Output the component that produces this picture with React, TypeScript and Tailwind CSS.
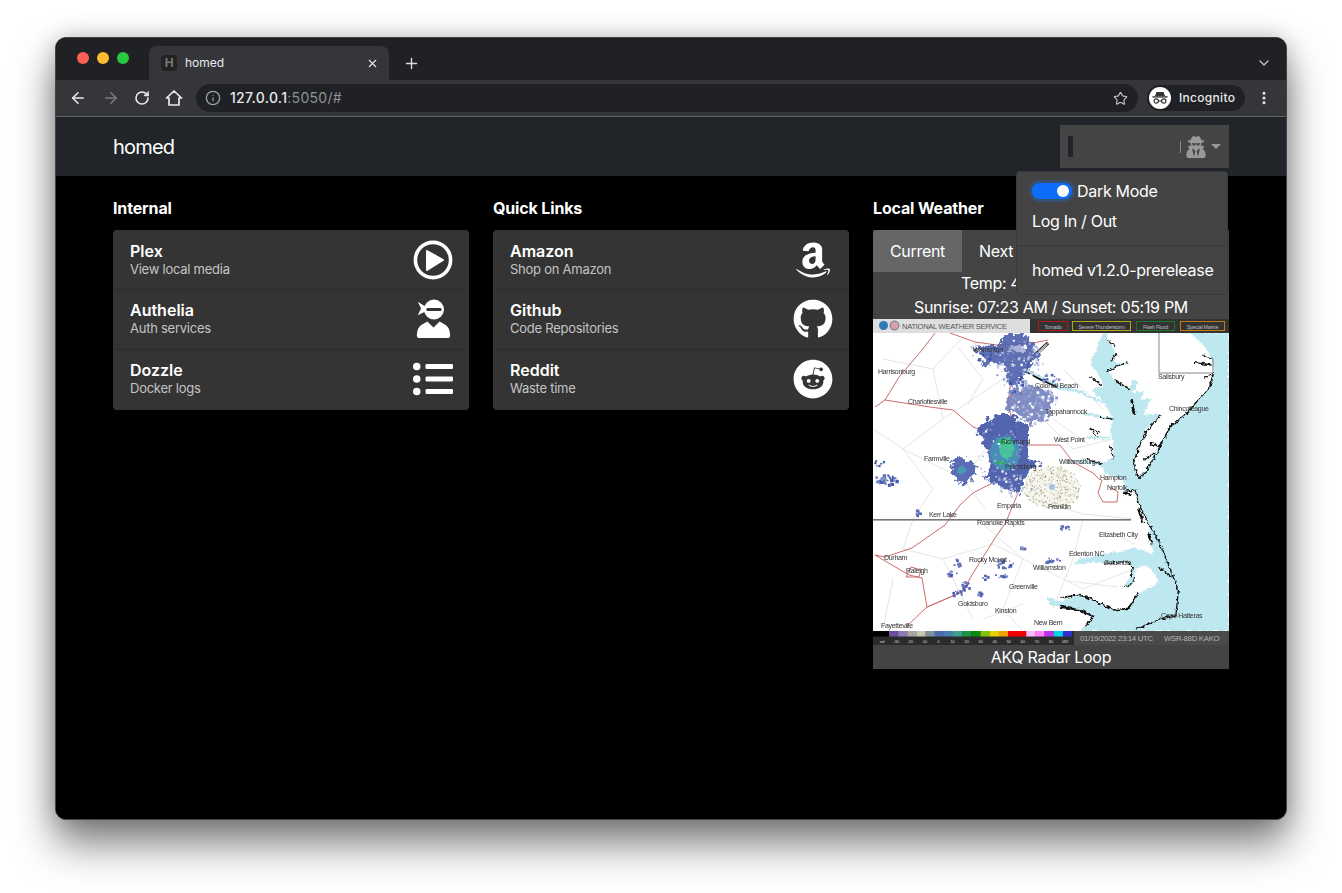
import { ArrowLeft, ArrowRight, ChevronDown, Info, MoreVertical, Plus, RotateCw, Star, X } from "lucide-react";
import { FaAmazon, FaGithub, FaListUl, FaReddit, FaUserSecret } from "react-icons/fa";
import type { ReactNode } from "react";

type Link = { title: string; sub: string; icon: ReactNode };

const PlayIcon = () => (
  <svg width="40" height="40" viewBox="0 0 40 40">
    <circle cx="20" cy="20" r="17.6" fill="none" stroke="white" strokeWidth="3.6" />
    <path d="M14 11 L30 20 L14 30 Z" fill="white" stroke="white" strokeWidth="2" strokeLinejoin="round" />
  </svg>
);

const NinjaIcon = () => (
  <svg width="40" height="40" viewBox="0 0 40 42" fill="white">
    <circle cx="21" cy="11" r="10.5" />
    <rect x="13" y="9.5" width="16" height="3.2" rx="1.4" fill="#343434" />
    <path d="M4 3 L12 8 L12 13 L4 17 L7.5 10 Z" />
    <path d="M3 38 Q3 29 10 26 L14 23.5 L20.5 30 L27 23.5 L31 26 Q38 29 38 38 Q38 41 35 41 L6 41 Q3 41 3 38 Z" />
  </svg>
);

const internal: Link[] = [
  { title: "Plex", sub: "View local media", icon: <PlayIcon /> },
  { title: "Authelia", sub: "Auth services", icon: <NinjaIcon /> },
  { title: "Dozzle", sub: "Docker logs", icon: <FaListUl size={40} color="white" /> },
];

const quick: Link[] = [
  { title: "Amazon", sub: "Shop on Amazon", icon: <FaAmazon size={40} color="white" /> },
  { title: "Github", sub: "Code Repositories", icon: <FaGithub size={40} color="white" /> },
  { title: "Reddit", sub: "Waste time", icon: <FaReddit size={40} color="white" /> },
];

// radar speckle is noise, seeded so the picture never changes between runs
let seed = 1234;
const rnd = () => {
  seed = (seed * 16807) % 2147483647;
  return (seed % 10000) / 10000;
};

const blob = (cx: number, cy: number, rx: number, ry: number, n: number, colors: string[], size = 3) =>
  Array.from({ length: n }, () => {
    const a = rnd() * Math.PI * 2;
    const r = Math.sqrt(rnd());
    return {
      x: cx + Math.cos(a) * r * rx,
      y: cy + Math.sin(a) * r * ry,
      s: size * (0.5 + rnd()),
      c: colors[Math.floor(rnd() * colors.length)],
    };
  });

const blues = ["#3f55a8", "#4a5fb0", "#5b6db5", "#7f8cc4"];
const pale = ["#a5aed6", "#c4cae6", "#ffffff", "#8a97cc"];
const tan = ["#8f8a60", "#b5b088", "#a8a478", "#c8c4a0", "#ffffff", "#ffffff"];

const speckle = [
  ...blob(145, 45, 26, 25, 90, pale, 1.8),
  ...blob(160, 85, 24, 20, 90, pale, 2),
  ...blob(128, 135, 25, 35, 70, pale, 1.5),
  ...blob(140, 165, 20, 12, 40, pale, 1.8),
  ...blob(143, 62, 8, 14, 24, blues, 2.2),
  ...blob(113, 36, 14, 6, 24, blues, 2.2),
  ...blob(176, 58, 12, 4, 14, blues, 2),
  ...blob(131, 244, 9, 5, 22, blues, 2),
  ...blob(127, 256, 6, 2, 8, blues, 2),
  ...blob(92, 266, 4, 5, 16, blues, 2),
  ...blob(84, 274, 5, 4, 16, blues, 2),
  ...blob(78, 254, 6, 3, 12, blues, 2),
  ...blob(84, 243, 4, 4, 8, blues, 2),
  ...blob(106, 274, 3, 4, 8, blues, 2),
  ...blob(113, 258, 4, 3, 6, blues, 2),
  ...blob(179, 241, 8, 3, 12, blues, 2),
  ...blob(192, 208, 6, 3, 12, blues, 2),
  ...blob(148, 228, 3, 2, 5, blues, 2),
  ...blob(44, 193, 4, 3, 8, blues, 2),
  ...blob(12, 160, 12, 5, 28, blues, 2.4),
  ...blob(6, 143, 5, 4, 8, blues, 2),
  ...blob(179, 168, 29, 22, 560, tan, 0.9),
];

const roads = [
  "2,88 12,81 26,58 49,31 62,14",
  "77,14 102,23 124,26 160,24 175,21",
  "12,81 57,88 80,91 100,108 124,116 155,126 187,126 200,143 220,154 227,161",
  "175,24 157,41 137,68 135,84 145,126 147,151 145,174 133,203 122,219 99,256 89,273 54,288 32,309",
  "145,151 129,159 100,174 87,186 72,206 39,229 12,238 2,236",
  "2,236 19,246 36,256 49,259 54,288",
  "54,288 82,276",
  "33,258 38,248 48,251 46,258 33,258",
  "229,161 225,174 230,183 244,183 245,173 237,168",
];

const counties = [
  "10,40 60,50 88,20", "60,50 70,100 30,130 60,170", "70,100 130,60 150,30", "30,130 90,160 112,190",
  "90,160 120,120", "170,100 200,130 240,120", "60,170 40,200", "160,180 210,195 260,200",
  "40,200 30,230 70,240 100,300", "110,205 150,240 210,270", "150,240 130,290 150,312", "210,200 200,240 180,290",
  "70,240 120,225 150,240", "210,270 260,250", "20,260 10,310", "250,40 240,14", "190,50 230,90", "85,28 110,60 95,85",
  "0,110 30,130", "180,100 215,125", "265,60 300,68 330,62", "240,215 262,225", "195,262 245,268", "110,300 150,285",
];

const labels: [string, number, number][] = [
  ["Harrisonburg", 5, 55], ["Charlottesville", 35, 85], ["Warrenton", 100, 33], ["Colonial Beach", 162, 69],
  ["Tappahannock", 172, 95], ["Salisbury", 285, 60], ["Chincoteague", 296, 92], ["West Point", 181, 123],
  ["Richmond", 128, 125], ["Farmville", 51, 142], ["Petersburg", 132, 150], ["Williamsburg", 186, 145],
  ["Hampton", 227, 161], ["Norfolk", 234, 171], ["Emporia", 124, 189], ["Franklin", 175, 190], ["Kerr Lake", 56, 198],
  ["Roanoke Rapids", 104, 206], ["Elizabeth City", 226, 218], ["Edenton NC", 196, 237], ["Columbia", 231, 246],
  ["Durham", 11, 241], ["Rocky Mount", 96, 243], ["Williamston", 160, 251], ["Raleigh", 33, 254], ["Greenville", 136, 270],
  ["Goldsboro", 85, 287], ["Kinston", 122, 294], ["New Bern", 161, 306], ["Cape Hatteras", 288, 299], ["Fayetteville", 8, 309],
];

const legendColors = [
  "#6a4fa0", "#8e7ab5", "#a8a8a0", "#c8c8b0", "#8090a0", "#4a6db0", "#4a80b0", "#40a090", "#1a9a40", "#0a8a10", "#80c010",
  "#e8d000", "#f0a000", "#f00000", "#f00000", "#ffb8ff", "#ff80ff", "#c030f0", "#00d8e0", "#3030d0",
];
const legendLabels = ["nd", "-30", "-20", "-10", "0", "10", "20", "30", "40", "50", "60", "70", "80", "≥82"];
const warnings: [string, number, number, string][] = [
  ["Tornado", 165, 29, "#b01818"],
  ["Severe Thunderstorm", 199, 58, "#b0a818"],
  ["Flash Flood", 263, 38, "#187a28"],
  ["Special Marine", 307, 44, "#c07a18"],
];

const RadarMap = () => (
  <svg viewBox="0 0 356 326" width="356" height="326" className="block">
    <defs>
      <filter id="soft" x="0" y="0" width="100%" height="100%">
        <feGaussianBlur stdDeviation="0.4" />
      </filter>
      <filter id="rough" x="-5%" y="-5%" width="110%" height="110%">
        <feTurbulence type="fractalNoise" baseFrequency="0.28" numOctaves="2" seed="4" />
        <feDisplacementMap in="SourceGraphic" scale="5" xChannelSelector="R" yChannelSelector="G" />
      </filter>
      <filter id="rougher" x="-5%" y="-5%" width="110%" height="110%">
        <feTurbulence type="fractalNoise" baseFrequency="0.18" numOctaves="3" seed="9" />
        <feDisplacementMap in="SourceGraphic" scale="13" xChannelSelector="R" yChannelSelector="G" />
      </filter>
    </defs>
    <rect width="356" height="326" fill="white" />
    <g filter="url(#soft)">
      {counties.map((p) => (
        <polyline key={p} points={p} fill="none" stroke="#dedede" strokeWidth="0.8" />
      ))}
      {/* water and coast, traced at 3x so the points read like the crops */}
      <g filter="url(#rough)">
        <g transform="translate(187 11) scale(0.3333)">
          <path
            d="M130 8 L105 70 L90 100 L125 150 L130 170 L95 180 L130 215 L160 265 L150 300 L160 340 L160 385 L120 400 L135 430 L190 450 L190 485 L225 480 L240 530 L265 580 L278 670 L230 655 L170 665 L100 680 L60 685 L40 705 L100 695 L130 700 L200 695 L220 715 L210 740 L190 770 L215 765 L225 740 L230 715 L260 705 L290 740 L295 760 L255 780 L235 790 L205 835 L160 840 L120 820 L80 800 L50 795 L0 815 L-40 800 L-30 825 L60 840 L100 860 L75 890 L60 903 L507 903 L507 8 Z"
            fill="#bde8ef"
          />
          <path
            d="M145 8 L390 8 L430 45 L455 85 L460 130 L450 170 L415 210 L375 250 L330 290 L295 350 L255 420 L235 445 L220 400 L240 340 L255 300 L290 265 L300 250 L250 255 L265 225 L275 205 L240 210 L255 180 L215 190 L235 155 L215 150 L210 175 L165 150 L145 125 L180 105 L210 100 L155 95 L170 70 L140 30 Z"
            fill="white"
          />
          <g fill="none" stroke="#bde8ef" strokeWidth="8">
            <path d="M-20 172 L50 182 L130 220" />
            <path d="M70 250 L160 268" />
            <path d="M80 322 L150 325" />
            <path d="M30 392 L125 402" />
          </g>
          <g fill="none" stroke="#111" strokeLinejoin="round">
            <path d="M300 255 L255 310 L240 345 L220 400 L235 445" strokeWidth="4" />
            <path d="M460 130 L450 170 L375 255 L330 290 L290 370 L255 430 L235 445" strokeWidth="4.5" />
            <path d="M270 340 L300 350 M250 390 L285 370" strokeWidth="5" />
            <path d="M430 75 L455 85 M405 98 L455 105 M430 145 L455 135" strokeWidth="4" />
            <path d="M140 125 L180 105 L205 98 M155 95 L170 70 M140 30 L165 50" strokeWidth="3.5" />
            <path d="M165 150 L210 178 M215 205 L225 255" strokeWidth="5" />
            <path d="M215 230 L225 250" strokeWidth="10" />
            <path d="M90 140 L125 165 M120 260 L160 268 M120 310 L90 295 L115 325 M150 345 L160 385 M70 385 L125 402" strokeWidth="3.5" />
            <path d="M190 485 L225 480 L240 530 L265 580 L295 630 L335 730 L355 780 L348 855 L300 868 L225 898" strokeWidth="4" />
            <path d="M235 535 L250 580 M265 610 L275 640" strokeWidth="8" />
            <path d="M190 488 L215 495" strokeWidth="8" />
            <path d="M295 710 L335 740" strokeWidth="5" />
            <path d="M0 805 L50 795 L80 800 L120 820 L160 840 L205 835 L235 790" strokeWidth="5" />
            <path d="M190 770 L215 765 L225 740 M130 700 L200 695 L220 715 L210 740" strokeWidth="3" />
            <path d="M0 830 L60 840 L100 860 L75 890" strokeWidth="6" />
          </g>
        </g>
      </g>
      <polyline points="286,13 286,54 340,54 340,40" fill="none" stroke="#555" strokeWidth="0.7" />
      <path d="M175 24 L160 38 L154 52 L168 60 L184 67" fill="none" stroke="#111" strokeWidth="3.4" />
      <path d="M174 25 L160 39 L155 52 L169 59 L186 67" fill="none" stroke="#bde8ef" strokeWidth="2" />
      {roads.map((p) => (
        <polyline key={p} points={p} fill="none" stroke="#cf6b6b" strokeWidth="1" />
      ))}
      {/* rain bands */}
      <g filter="url(#rougher)" opacity="0.92">
        <g transform="translate(57 11) scale(0.3333)">
          <path d="M125 50 L200 45 L230 10 L285 10 L310 50 L330 80 L300 110 L280 140 L250 170 L235 160 L225 105 L175 100 L155 110 L165 80 Z" fill="#5163ae" />
          <ellipse cx="260" cy="55" rx="24" ry="12" fill="#a3acd3" />
          <path d="M240 180 L300 165 L365 190 L365 240 L345 270 L300 280 L260 250 L225 240 Z" fill="#7683bf" />
          <path d="M135 300 L175 265 L240 250 L300 290 L295 330 L290 385 L330 395 L290 430 L280 470 L265 490 L210 470 L165 440 L185 405 L165 345 Z" fill="#4558a9" />
          <path d="M60 400 L90 380 L140 400 L130 450 L95 465 L65 430 Z" fill="#4d60ad" />
        </g>
      </g>
      <g filter="url(#rough)">
        <g transform="translate(57 11) scale(0.3333)">
          <ellipse cx="225" cy="370" rx="45" ry="52" fill="#4a8fb5" />
          <ellipse cx="230" cy="355" rx="22" ry="32" fill="#45c49a" />
          <ellipse cx="222" cy="335" rx="15" ry="8" fill="#2bc06a" />
          <ellipse cx="212" cy="398" rx="12" ry="5" fill="#2bb24a" />
          <ellipse cx="95" cy="420" rx="16" ry="10" fill="#4a9ab0" />
        </g>
      </g>
      <ellipse cx="179" cy="168" rx="28" ry="21" fill="#ddd9c0" opacity="0.25" />
      {speckle.map((c, i) => (
        <rect key={i} x={c.x} y={c.y} width={c.s} height={c.s} fill={c.c} />
      ))}
      <circle cx="179" cy="168" r="3" fill="#a8c0e0" />
      <rect x="0" y="200" width="258" height="1.6" fill="#777" />
      {labels.map(([t, x, y]) => (
        <text key={t} x={x} y={y} fontSize="7" fill="#333" fontFamily="Liberation Sans, sans-serif">
          {t}
        </text>
      ))}
    </g>
    <rect width="157" height="14" fill="#dedede" />
    <rect x="157" width="199" height="14" fill="#333" />
    <circle cx="10.5" cy="6.5" r="4.5" fill="#2f79b5" />
    <circle cx="21.5" cy="6.5" r="4.5" fill="#d8a0a8" stroke="#2a4a8a" strokeWidth="0.6" />
    <text x="29" y="9.5" fontSize="7.6" fill="#555" fontFamily="Liberation Sans, sans-serif">
      NATIONAL WEATHER SERVICE
    </text>
    {warnings.map(([t, x, w, c]) => (
      <g key={t}>
        <rect x={x + 0.5} y="2.5" width={w} height="9" fill="none" stroke={c} />
        <text x={x + w / 2 + 0.5} y="9.5" fontSize="5.4" fill="#bbb" textAnchor="middle" fontFamily="Liberation Sans, sans-serif">
          {t}
        </text>
      </g>
    ))}
    <rect y="312" width="356" height="14" fill="#4a4a4a" />
    <rect y="312" width="201" height="14" fill="#2b2b2b" />
    <rect y="312" width="16" height="5.5" fill="#000" />
    {legendColors.map((c, i) => (
      <rect key={i} x={16 + i * 9.15} y="312" width="9.3" height="5.5" fill={c} />
    ))}
    {legendLabels.map((t, i) => (
      <text key={t} x={9 + i * 14.07} y="323.6" fontSize="4.4" fill="#ccc" textAnchor="middle" fontFamily="Liberation Sans, sans-serif">
        {t}
      </text>
    ))}
    <text x="207" y="322" fontSize="7.8" fill="#b5b5b5" fontFamily="Liberation Sans, sans-serif">
      01/19/2022 23:14 UTC
    </text>
    <text x="291" y="322" fontSize="7.8" fill="#b5b5b5" fontFamily="Liberation Sans, sans-serif">
      WSR-88D KAKO
    </text>
  </svg>
);

const LinkCard = ({ heading, links }: { heading: string; links: Link[] }) => (
  <div>
    <h2 className="mb-[10px] text-base leading-6 font-bold tracking-[-0.15px] text-white">{heading}</h2>
    <div className="overflow-hidden rounded bg-[#343434] pb-px">
      {links.map((l, i) => (
        <div
          key={l.title}
          className={`flex items-center justify-between pr-4 pl-[17px] ${i > 0 ? "h-[60px] border-t border-[#2c2c2c] pb-[2px]" : "h-[59px]"}`}
        >
          <div className="flex -translate-y-px flex-col">
            <span className="text-base leading-5 font-semibold tracking-normal text-white">{l.title}</span>
            <span className="text-[13px] leading-4 tracking-[-0.25px] text-[#c4c4c4]">{l.sub}</span>
          </div>
          {l.icon}
        </div>
      ))}
    </div>
  </div>
);

const App = () => {
  return (
    <div className="h-[893px] w-[1342px] overflow-hidden bg-white pt-[37px] pl-[55px] font-['Inter',sans-serif] tracking-[-0.3px]">
      <div className="relative flex h-[783px] w-[1232px] flex-col overflow-hidden rounded-[11px] border border-[#444] bg-black shadow-[0_24px_40px_rgba(0,0,0,0.5),0_0_24px_rgba(0,0,0,0.2)]">
        {/* tab strip */}
        <div className="flex h-[42px] shrink-0 bg-[#202124] pl-[21px]">
          <div className="flex h-[42px] items-center gap-2 pb-[3px]">
            <span className="h-3 w-3 rounded-full bg-[#ff5f57]" />
            <span className="h-3 w-3 rounded-full bg-[#febc2e]" />
            <span className="h-3 w-3 rounded-full bg-[#28c840]" />
          </div>
          <div className="mt-2 ml-5 flex h-[34px] w-[240px] items-center rounded-t-lg bg-[#35363a] pr-[10px] pl-3">
            <span className="flex h-4 w-4 items-center justify-center rounded-sm bg-[#222] text-xs leading-none font-bold text-[#777]">
              H
            </span>
            <span className="ml-2 flex-1 text-xs tracking-normal text-[#e8eaed]">homed</span>
            <X size={13} color="#e8eaed" strokeWidth={2} />
          </div>
          <div className="ml-[14px] flex items-center pt-[8px]">
            <Plus size={17} color="#dadce0" strokeWidth={2} />
          </div>
          <div className="ml-auto flex items-center pt-[8px] pr-[14px]">
            <ChevronDown size={16} color="#bdc1c6" strokeWidth={2} />
          </div>
        </div>

        {/* toolbar */}
        <div className="flex h-[37px] shrink-0 items-center border-b border-[#626367] bg-[#35363a] pr-[14px] pl-[13px]">
          <div className="flex w-[127px] items-center justify-between pr-[13px]">
            <ArrowLeft size={18} color="#e8eaed" strokeWidth={2} />
            <ArrowRight size={18} color="#7b7c7f" strokeWidth={2} />
            <RotateCw size={16} color="#e8eaed" strokeWidth={2.4} />
            <svg width="18" height="18" viewBox="0 0 18 18" fill="none" stroke="#e8eaed" strokeWidth="1.7" strokeLinejoin="round">
              <path d="M1.5 9 L9 2 L16.5 9 H14 V16 H4 V9 Z" />
            </svg>
          </div>
          <div className="flex h-7 w-[942px] items-center rounded-full bg-[#202124] pr-[10px] pl-[9px]">
            <Info size={16} color="#9aa0a6" strokeWidth={2} />
            <span className="ml-[9px] flex-1 text-sm font-medium tracking-[0.3px] text-[#e8eaed]">
              127.0.0.1<span className="font-normal text-[#8f9296]">:5050/#</span>
            </span>
            <Star size={15} color="#c4c7c5" strokeWidth={1.8} />
          </div>
          <div className="ml-[9px] flex h-[26px] w-[98px] items-center rounded-full bg-[#202124] pl-[2px]">
            <span className="flex h-[22px] w-[22px] items-center justify-center rounded-full bg-white">
              <svg width="16" height="14" viewBox="0 0 16 14" fill="#35363a">
                <path d="M4.4 1 H11.6 L13 5 H3 Z" />
                <rect x="0.5" y="5.2" width="15" height="1.4" />
                <circle cx="4.2" cy="10" r="2.2" fill="none" stroke="#35363a" strokeWidth="1.2" />
                <circle cx="11.8" cy="10" r="2.2" fill="none" stroke="#35363a" strokeWidth="1.2" />
                <rect x="6.2" y="9.4" width="3.6" height="1.1" />
              </svg>
            </span>
            <span className="ml-[8px] text-xs font-medium tracking-[0.3px] text-[#e8eaed]">Incognito</span>
          </div>
          <div className="ml-auto flex">
            <MoreVertical size={16} color="#e8eaed" strokeWidth={2.6} />
          </div>
        </div>

        {/* app navbar */}
        <div className="flex h-[59px] shrink-0 items-center justify-between bg-[#212529] px-[57px]">
          <span className="text-xl tracking-[-0.8px] text-white">homed</span>
          <div className="flex h-[43px] w-[169px] items-center bg-[#444] pl-2">
            <span className="h-[21px] w-[5px] bg-[#212529]" />
            <span className="ml-[107px] h-3 w-px bg-[#888]" />
            <FaUserSecret size={22} color="#999" className="ml-[4px]" />
            <span className="ml-[4px] h-0 w-0 border-x-[5px] border-t-[5px] border-x-transparent border-t-[#999]" />
          </div>
        </div>

        {/* page body */}
        <div className="grid flex-1 grid-cols-3 items-start gap-6 bg-black px-[57px] pt-5">
          <LinkCard heading="Internal" links={internal} />
          <LinkCard heading="Quick Links" links={quick} />
          <div>
            <h2 className="mb-[10px] text-base leading-6 font-bold tracking-[-0.15px] text-white">Local Weather</h2>
            <div className="bg-[#444] text-center text-base text-white">
              <div className="flex h-[42px]">
                <span className="flex w-[89px] items-center justify-center rounded-tl bg-[#666]">Current</span>
                <span className="flex items-center pl-[17px]">Next</span>
              </div>
              <div className="h-6 pl-[88px] text-left leading-[22px]">Temp: 4</div>
              <div className="h-[23px] leading-[22px]">Sunrise: 07:23 AM / Sunset: 05:19 PM</div>
              <RadarMap />
              <div className="h-6 leading-6">AKQ Radar Loop</div>
            </div>
          </div>
        </div>

        {/* settings dropdown */}
        <div className="absolute top-[133px] left-[960px] h-[124px] w-[212px] rounded border border-[#3a3a3a] bg-[#444] text-base text-white">
          <div className="flex h-[30px] items-center pt-[8px] pl-[15px]">
            <span className="flex h-4 w-10 items-center justify-end rounded-full bg-[#0d6efd] pr-[3px] shadow-[0_0_0_3px_rgba(13,110,253,0.25)]">
              <span className="h-3 w-3 rounded-full bg-white" />
            </span>
            <span className="ml-[5px]">Dark Mode</span>
          </div>
          <div className="flex h-[30px] items-center pt-[8px] pl-[15px]">Log In / Out</div>
          <div className="mt-[13px] border-t border-[#383838]" />
          <div className="flex h-[47px] items-center pl-[15px]">homed v1.2.0-prerelease</div>
        </div>
      </div>
    </div>
  );
};

export default App;
